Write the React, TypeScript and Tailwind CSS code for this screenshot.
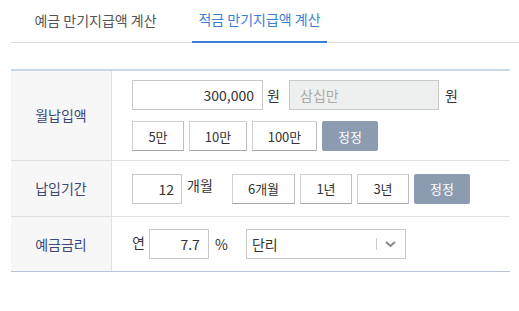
import { useState } from "react";

const font = { fontFamily: '"Noto Sans CJK KR", "Noto Sans", sans-serif' };

const Btn = ({ children, w }: { children: React.ReactNode; w: string }) => (
    <button className={`${w} h-[30px] bg-white border border-[#d0d0d0] border-b-[#a8a8a8] border-r-[#bdbdbd] text-[13px] text-[#333] leading-none`}>
        {children}
    </button>
);

const ResetBtn = () => (
    <button className="w-[56px] h-[30px] bg-[#8b9bb0] rounded-[2px] text-[13px] text-white leading-none">정정</button>
);

const App = () => {
    const [tab, setTab] = useState(1);
    const tabs = ["예금 만기지급액 계산", "적금 만기지급액 계산"];

    return (
        <div className="w-[519px] h-[311px] bg-white pl-[11px]" style={font}>
            {/* tabs */}
            <div className="flex h-[43px] border-b border-[#dcdcdc]">
                {tabs.map((t, i) => (
                    <button
                        key={t}
                        onClick={() => setTab(i)}
                        className={`${i === 0 ? "w-[169px] mr-[12px]" : "w-[135px]"} h-[43px] -mb-px pb-[4px] whitespace-nowrap text-[14px] leading-none ${tab === i ? "text-[#3a7fd6] border-b-2 border-[#3a7fd6]" : "text-[#555]"}`}
                    >
                        {t}
                    </button>
                ))}
            </div>

            {/* table */}
            <div className="mt-[26px] w-[499px] border-t-2 border-t-[#c7d7ed] border-b border-b-[#b9c2d6] text-[14px] text-[#333]">
                {/* 월납입액 */}
                <div className="flex h-[90px] border-b border-[#e0e0e0]">
                    <div className="w-[101px] bg-[#f7f7f7] border-r border-[#e0e0e0] flex items-center justify-center text-[#3d4878]">월납입액</div>
                    <div className="flex-1 pl-[20px] flex flex-col justify-center gap-[11px]">
                        <div className="flex items-center">
                            <input readOnly value="300,000" className="w-[131px] h-[30px] border border-[#c8c8c8] text-right pr-[8px] text-[14px] text-[#333] outline-none" />
                            <span className="ml-[4px] w-[22px]">원</span>
                            <input readOnly placeholder="삼십만" className="w-[150px] h-[30px] border border-[#c8c8c8] bg-[#eef0ef] pl-[10px] text-[14px] placeholder:text-[#aaa] outline-none" />
                            <span className="ml-[6px]">원</span>
                        </div>
                        <div className="flex gap-[5px]">
                            <Btn w="w-[52px]">5만</Btn>
                            <Btn w="w-[58px]">10만</Btn>
                            <Btn w="w-[65px]">100만</Btn>
                            <ResetBtn />
                        </div>
                    </div>
                </div>

                {/* 납입기간 */}
                <div className="flex h-[56px] border-b border-[#e0e0e0]">
                    <div className="w-[101px] bg-[#f7f7f7] border-r border-[#e0e0e0] flex items-center justify-center text-[#3d4878]">납입기간</div>
                    <div className="flex-1 pl-[20px] flex items-center">
                        <input readOnly value="12" className="w-[50px] h-[30px] border border-[#c8c8c8] text-right pr-[7px] text-[14px] text-[#333] outline-none" />
                        <span className="ml-[5px] mb-[6px] w-[45px]">개월</span>
                        <div className="flex gap-[5px]">
                            <Btn w="w-[63px]">6개월</Btn>
                            <Btn w="w-[52px]">1년</Btn>
                            <Btn w="w-[52px]">3년</Btn>
                            <ResetBtn />
                        </div>
                    </div>
                </div>

                {/* 예금금리 */}
                <div className="flex h-[54px]">
                    <div className="w-[101px] bg-[#f7f7f7] border-r border-[#e0e0e0] flex items-center justify-center text-[#3d4878]">예금금리</div>
                    <div className="flex-1 pl-[20px] flex items-center">
                        <span className="mr-[4px] mb-[4px]">연</span>
                        <input readOnly value="7.7" className="w-[60px] h-[30px] border border-[#c8c8c8] text-right pr-[8px] text-[14px] text-[#333] outline-none" />
                        <span className="ml-[6px] w-[31px]">%</span>
                        <div className="w-[160px] h-[30px] border border-[#c8c8c8] flex items-center pl-[5px]">
                            <span className="flex-1">단리</span>
                            <span className="w-px h-[12px] bg-[#ccc]" />
                            <svg width="28" height="12" viewBox="0 0 28 12">
                                <polyline points="9,4 13.5,8 18,4" fill="none" stroke="#888" strokeWidth="2" />
                            </svg>
                        </div>
                    </div>
                </div>
            </div>
        </div>
    );
};

export default App;
